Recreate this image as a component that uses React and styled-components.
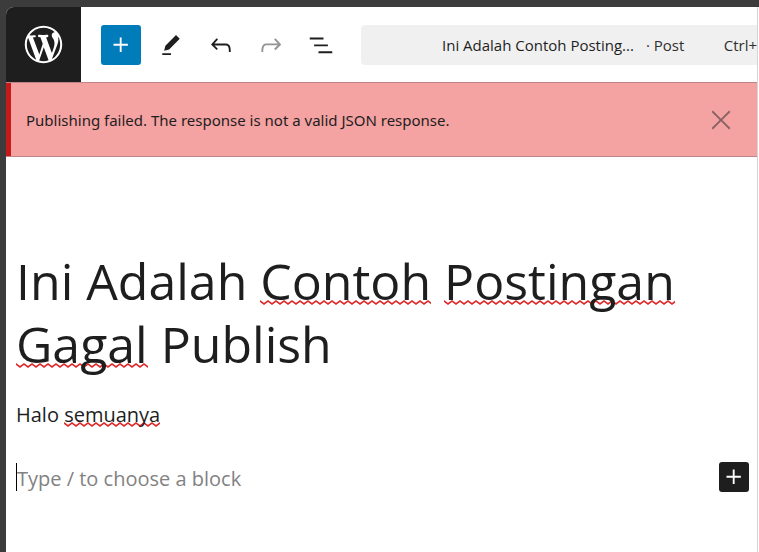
import React, { useState } from 'react';
import styled, { createGlobalStyle } from 'styled-components';

const GlobalStyle = createGlobalStyle`
  * {
    box-sizing: border-box;
  }
  body {
    margin: 0;
    background: #3c3c3c;
    color: #1e1e1e;
    font-family: "Open Sans", "Noto Sans", sans-serif;
    font-size: 15px;
  }
  button, input {
    font: inherit;
    color: inherit;
  }
`;

const Frame = styled.div`
  display: flex;
  min-height: 100vh;
  padding: 7px 0 0 6px;
`;

const Editor = styled.div`
  flex: 1;
  min-width: 0;
  overflow: hidden;
  background: #fff;
  border-top-left-radius: 8px;
`;

const Sidebar = styled.aside`
  width: 2px;
  background: #fff;
  border-left: 1px solid #d5d5d5;
`;

const Header = styled.header`
  display: flex;
  align-items: center;
  height: 75px;
`;

const HomeLink = styled.a`
  display: flex;
  flex: none;
  align-items: center;
  justify-content: center;
  width: 75px;
  height: 75px;
  margin-right: 20px;
  background: #1e1e1e;
  color: #fff;
`;

const Tools = styled.div`
  display: flex;
  flex: none;
  gap: 10px;
  margin-right: 20px;
`;

const IconButton = styled.button`
  display: flex;
  flex: none;
  align-items: center;
  justify-content: center;
  width: ${(props) => (props.$small ? '30px' : '40px')};
  height: ${(props) => (props.$small ? '30px' : '40px')};
  padding: 0;
  border: 0;
  border-radius: 3px;
  background: ${(props) => props.$bg || 'transparent'};
  color: ${(props) => props.$color || '#1e1e1e'};
  cursor: pointer;

  &:disabled {
    color: #949494;
    cursor: default;
  }
`;

const CommandBar = styled.button`
  display: flex;
  flex: 1;
  align-items: center;
  height: 40px;
  padding: 0 0 0 81px;
  border: 0;
  border-radius: 4px 0 0 4px;
  background: #f0f0f0;
  white-space: nowrap;
  cursor: pointer;
`;

const PostType = styled.span`
  margin-left: 12px;
  color: #2f2f2f;
`;

const Shortcut = styled.span`
  margin-left: auto;
  color: #2f2f2f;
`;

const Notice = styled.div`
  display: flex;
  align-items: center;
  justify-content: space-between;
  height: 75px;
  padding: 0 16px 0 20px;
  border: solid #bf8485;
  border-width: 1px 0;
  background: #f4a2a2;
  box-shadow: inset 5px 0 #c41a1c;
`;

const NoticeText = styled.p`
  margin: 0;
  font-family: "Noto Sans", "Open Sans", sans-serif;
`;

const Canvas = styled.main`
  padding: 93px 8px 0 10px;
`;

const Title = styled.h1`
  margin: 0 0 23px;
  font-size: 50px;
  font-weight: 400;
  line-height: 63px;
  outline: none;
`;

const Paragraph = styled.p`
  margin: 0 0 31px;
  font-size: 20px;
  line-height: 32px;
  outline: none;
`;

const Misspelled = styled.span`
  background: url("data:image/svg+xml,%3Csvg xmlns='http://www.w3.org/2000/svg' width='8' height='5'%3E%3Cpath d='M-4 4 L0 1 L4 4 L8 1 L12 4' fill='none' stroke='%23dc2a2a' stroke-width='1.6'/%3E%3C/svg%3E")
    repeat-x left bottom ${(props) => props.$rise || '0'};
`;

const Appender = styled.div`
  display: flex;
  align-items: center;
`;

const BlockInput = styled.input`
  flex: 1;
  min-width: 0;
  height: 28px;
  padding: 2px 0 0;
  border: 0;
  border-left: 1px solid #000;
  background: none;
  font-size: 20px;
  outline: none;

  &::placeholder {
    color: #828282;
    opacity: 1;
  }
`;

const icons = {
  plus: 'M11 12.5V17.5H12.5V12.5H17.5V11H12.5V6H11V11H6V12.5H11Z',
  pencil: 'm19 7-3-3-8.5 8.5-1 4 4-1L19 7Zm-7 11.5H5V20h7v-1.5Z',
  undo: 'M18.3 11.7c-.6-.6-1.4-.9-2.3-.9H6.7l2.9-3.3-1.1-1-4.5 5L8.5 16l1-1-2.7-2.7H16c.5 0 .9.2 1.3.5 1 1 1 3.4 1 4.5v.3h1.5v-.2c0-1.5 0-4.3-1.5-5.7z',
  redo: 'M15.6 6.5l-1.1 1 2.9 3.3H8c-.9 0-1.7.3-2.3.9-1.4 1.5-1.4 4.2-1.4 5.6v.2h1.5v-.3c0-1.1 0-3.5 1-4.5.3-.3.7-.5 1.3-.5h9.2L14.5 15l1.1 1.1 4.6-4.6-4.6-5z',
  list: 'M3 6h11v1.5H3V6Zm3.5 5.5h11V13h-11v-1.5ZM21 17H10v1.5h11V17Z',
  close: 'm13.06 12 6.47-6.47-1.06-1.06L12 10.94 5.53 4.47 4.47 5.53 10.94 12l-6.47 6.47 1.06 1.06L12 13.06l6.47 6.47 1.06-1.06L13.06 12Z',
};

const Icon = ({ name }) => (
  <svg width="30" height="30" viewBox="0 0 24 24" fill="currentColor" aria-hidden="true">
    <path d={icons[name]} />
  </svg>
);

const WordPressLogo = () => (
  <svg width="45" height="45" viewBox="-2 -2 24 24" fill="currentColor" aria-hidden="true">
    <path d="M20 10c0-5.51-4.49-10-10-10C4.48 0 0 4.49 0 10c0 5.52 4.48 10 10 10 5.51 0 10-4.48 10-10zM7.78 15.37L4.37 6.22c.55-.02 1.17-.08 1.17-.08.5-.06.44-1.13-.06-1.11 0 0-1.45.11-2.37.11-.18 0-.37 0-.58-.01C4.12 2.69 6.87 1.11 10 1.11c2.33 0 4.45.87 6.05 2.34-.68-.11-1.65.39-1.65 1.58 0 .74.45 1.36.9 2.1.35.61.55 1.36.55 2.46 0 1.49-1.4 5-1.4 5l-3.03-8.37c.54-.02.82-.17.82-.17.5-.05.44-1.25-.06-1.22 0 0-1.44.12-2.38.12-.87 0-2.33-.12-2.33-.12-.5-.03-.56 1.2-.06 1.22l.92.08 1.26 3.41zM17.41 10c.24-.64.74-1.87.43-4.25.7 1.29 1.05 2.71 1.05 4.25 0 3.29-1.73 6.24-4.4 7.78.97-2.59 1.94-5.2 2.92-7.78zM6.1 18.09C3.12 16.65 1.11 13.53 1.11 10c0-1.3.23-2.48.72-3.59C3.25 10.3 4.67 14.2 6.1 18.09zm4.03-6.63l2.58 6.98c-.86.29-1.76.45-2.71.45-.79 0-1.57-.11-2.29-.33.81-2.38 1.62-4.74 2.42-7.1z" />
  </svg>
);

const App = () => {
  const [showNotice, setShowNotice] = useState(true);
  const [block, setBlock] = useState('');

  return (
    <>
      <GlobalStyle />
      <Frame>
        <Editor>
          <Header>
            <HomeLink href="#" aria-label="View Posts">
              <WordPressLogo />
            </HomeLink>
            <Tools>
              <IconButton $bg="#007cba" $color="#fff" aria-label="Toggle block inserter">
                <Icon name="plus" />
              </IconButton>
              <IconButton aria-label="Tools">
                <Icon name="pencil" />
              </IconButton>
              <IconButton aria-label="Undo">
                <Icon name="undo" />
              </IconButton>
              <IconButton aria-label="Redo" disabled>
                <Icon name="redo" />
              </IconButton>
              <IconButton aria-label="Document Overview">
                <Icon name="list" />
              </IconButton>
            </Tools>
            <CommandBar>
              <span>Ini Adalah Contoh Posting...</span>
              <PostType>· Post</PostType>
              <Shortcut>Ctrl+</Shortcut>
            </CommandBar>
          </Header>

          {showNotice && (
            <Notice role="alert">
              <NoticeText>Publishing failed. The response is not a valid JSON response.</NoticeText>
              <IconButton $color="#8a6364" aria-label="Close" onClick={() => setShowNotice(false)}>
                <Icon name="close" />
              </IconButton>
            </Notice>
          )}

          <Canvas>
            <Title contentEditable suppressContentEditableWarning spellCheck={false}>
              Ini Adalah <Misspelled $rise="10px">Contoh</Misspelled>{' '}
              <Misspelled $rise="10px">Postingan</Misspelled>{' '}
              <Misspelled $rise="10px">Gagal</Misspelled> Publish
            </Title>
            <Paragraph contentEditable suppressContentEditableWarning spellCheck={false}>
              Halo <Misspelled $rise="1px">semuanya</Misspelled>
            </Paragraph>
            <Appender>
              <BlockInput
                aria-label="Add block"
                placeholder="Type / to choose a block"
                value={block}
                onChange={(e) => setBlock(e.target.value)}
              />
              <IconButton $small $bg="#1e1e1e" $color="#fff" aria-label="Add block">
                <Icon name="plus" />
              </IconButton>
            </Appender>
          </Canvas>
        </Editor>
        <Sidebar />
      </Frame>
    </>
  );
};

export default App;
